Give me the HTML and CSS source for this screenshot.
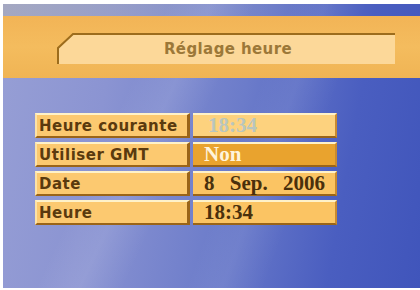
FILE: index.html
```html
<!DOCTYPE html>
<html lang="fr">
<head>
<meta charset="utf-8">
<link rel="stylesheet" href="styles.css">
</head>
<body>
<div class="screen">
  <div class="streaks"></div>
  <div class="band">
    <div class="tab">
      <svg class="tab-shape" width="338" height="31" viewBox="0 0 338 31" preserveAspectRatio="none">
        <polygon points="16,1 338,1 338,31 1,31 1,15" fill="#fcd899"/>
        <polyline points="1,31 1,15 16,1 338,1" fill="none" stroke="#9c6c1c" stroke-width="2"/>
      </svg>
      <span class="title">Réglage heure</span>
    </div>
  </div>
  <div class="table">
    <div class="row">
      <div class="label">Heure courante</div>
      <div class="value disabled">18:34</div>
    </div>
    <div class="row">
      <div class="label">Utiliser GMT</div>
      <div class="value selected">Non</div>
    </div>
    <div class="row">
      <div class="label">Date</div>
      <div class="value">8 Sep. 2006</div>
    </div>
    <div class="row">
      <div class="label">Heure</div>
      <div class="value">18:34</div>
    </div>
  </div>
</div>
</body>
</html>
```
FILE: styles.css
```css
html, body {
  margin: 0;
  padding: 0;
  background: #ffffff;
}
body {
  padding: 4px 0 2px 3px;
}
.screen {
  position: relative;
  width: 417px;
  height: 284px;
  overflow: hidden;
  background: linear-gradient(100deg, #979fd5 0%, #8b94d2 25%, #6c7cca 55%, #4a5ec0 80%, #4055bb 100%);
  padding-top: 12px;
  box-sizing: border-box;
}
.streaks {
  position: absolute;
  inset: 0;
  background:
    linear-gradient(115deg, transparent 30%, rgba(255,255,255,0.10) 38%, transparent 46%),
    linear-gradient(110deg, transparent 55%, rgba(255,255,255,0.07) 62%, transparent 70%),
    linear-gradient(90deg, rgba(170,172,185,0.7) 0%, rgba(150,160,200,0.3) 50%, rgba(0,0,0,0) 80%) 0 0 / 100% 12px no-repeat;
  pointer-events: none;
}
.band {
  position: relative;
  height: 62px;
  background: linear-gradient(180deg, #f2b456 0%, #f4bc5e 50%, #f0b454 100%);
  padding: 17px 0 0 54px;
  box-sizing: border-box;
}
.tab {
  position: relative;
  width: 338px;
  height: 31px;
  display: flex;
  align-items: center;
  justify-content: center;
}
.tab-shape {
  position: absolute;
  left: 0;
  top: 0;
}
.title {
  position: relative;
  font-family: "DejaVu Sans", sans-serif;
  font-weight: bold;
  font-size: 15px;
  color: #9c7838;
  letter-spacing: 0.4px;
  margin-left: 4px;
  margin-top: 1px;
}
.table {
  position: relative;
  margin: 35px 0 0 32px;
  display: flex;
  flex-direction: column;
  gap: 4px;
  width: 302px;
}
.row {
  display: flex;
  gap: 3px;
  height: 25px;
}
.label, .value {
  box-sizing: border-box;
  display: flex;
  align-items: center;
  border-top: 2px solid #fff2c8;
  border-bottom: 2px solid #9a6418;
}
.label {
  width: 155px;
  background: #fcc970;
  border-left: 2px solid #fde2a6;
  border-right: 3px solid #9a6418;
  padding-left: 2px;
  font-family: "DejaVu Sans", sans-serif;
  font-weight: bold;
  font-size: 15px;
  letter-spacing: 0.5px;
  color: #5a3a0e;
}
.value {
  width: 144px;
  background: #fbc463;
  border-right: 2px solid #c88a30;
  padding-left: 11px;
  font-family: "Liberation Serif", serif;
  font-weight: bold;
  font-size: 21px;
  word-spacing: 10px;
  color: #4a300c;
}
.value.disabled {
  background: #fdd27e;
  color: #b9c6be;
  padding-left: 15px;
}
.value.selected {
  background: #e9a32e;
  color: #fff4dc;
}
```
